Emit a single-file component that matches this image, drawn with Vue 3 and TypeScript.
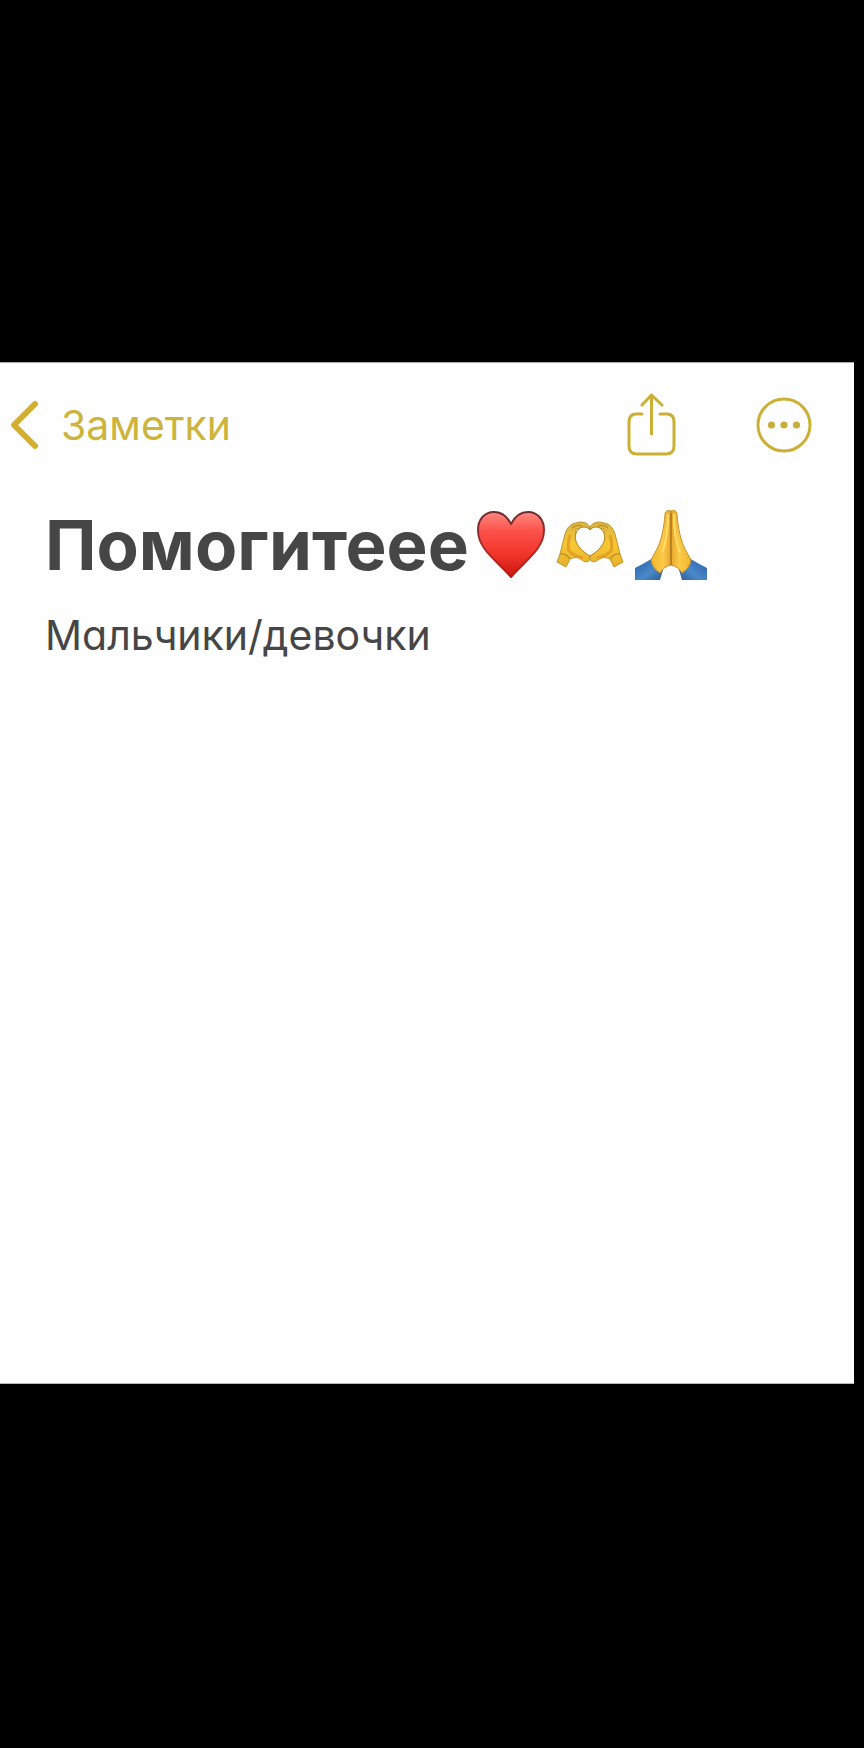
<script setup lang="ts">
const backLabel = 'Заметки'
const title = 'Помогитеее'
const body = 'Мальчики/девочки'
</script>

<template>
  <div class="screen">
    <main class="note">
      <header class="toolbar">
        <button class="back" type="button">
          <svg class="chevron" viewBox="0 0 28 50" aria-hidden="true">
            <path d="M25 4 4 25 25 46" />
          </svg>
          <span>{{ backLabel }}</span>
        </button>
        <div class="actions">
          <button class="action" type="button" aria-label="Поделиться">
            <svg class="share" viewBox="0 0 50 64" aria-hidden="true">
              <path d="M16 21H10Q3 21 3 29V53Q3 61 11 61H40Q48 61 48 53V29Q48 21 41 21H34" />
              <path d="M25.500 41V2M16 12 25.500 2 36 12" />
            </svg>
          </button>
          <button class="action" type="button" aria-label="Ещё">
            <svg class="more" viewBox="0 0 56 56" aria-hidden="true">
              <circle cx="28" cy="28" r="26" />
              <g class="dots">
                <circle cx="15.500" cy="28" r="3.600" />
                <circle cx="28" cy="28" r="3.600" />
                <circle cx="40.500" cy="28" r="3.600" />
              </g>
            </svg>
          </button>
        </div>
      </header>

      <article class="content">
        <h1 class="title">
          <span>{{ title }}</span>
          <span class="emojis">
            <svg class="emoji heart" viewBox="0 0 68 68" role="img" aria-label="сердце">
              <defs>
                <linearGradient id="heartFill" x1="0" y1="0" x2="0" y2="1">
                  <stop offset="0" stop-color="#ff8880" />
                  <stop offset=".3" stop-color="#fb5149" />
                  <stop offset=".65" stop-color="#f2352b" />
                  <stop offset="1" stop-color="#c9170f" />
                </linearGradient>
                <linearGradient id="heartEdge" x1="0" y1="0" x2="0" y2="1">
                  <stop offset="0" stop-color="#6e2c30" />
                  <stop offset=".5" stop-color="#a52f2e" />
                  <stop offset="1" stop-color="#ba1b12" />
                </linearGradient>
              </defs>
              <path
                d="M34 13C30 5 24 1 17 1 7 1 1 9 1 19 1 38 19 49 34 66 49 49 67 38 67 19 67 9 61 1 51 1 44 1 38 5 34 13Z"
                fill="url(#heartFill)" stroke="url(#heartEdge)" stroke-width="2" stroke-linejoin="round"
              />
            </svg>
            <svg class="emoji hands" viewBox="0 0 68 48" role="img" aria-label="руки сердечком">
              <defs>
                <linearGradient id="skin" x1="0" y1="0" x2="0" y2="1">
                  <stop offset="0" stop-color="#d9b440" />
                  <stop offset=".5" stop-color="#f8c832" />
                  <stop offset="1" stop-color="#e6b02c" />
                </linearGradient>
                <g id="hand">
                  <path
                    d="M34 6C31 1 25 0 20 2 14 3 11 7 9 13L4 33 1 41 10 46 14 38C19 36 22 36 26 39 30 42 33 41 34 38V31L20 20V8H34Z"
                    fill="url(#skin)" stroke="#b89730" stroke-width="1"
                  />
                  <path d="M4 33Q10 32 14 38M16 7Q20 3 26 5" fill="none" stroke="#bd8e25" stroke-width="1.300" />
                  <path d="M14 14Q11 24 13 30Q18 35 27 37" fill="none" stroke="#e3a127" stroke-width="3" />
                </g>
              </defs>
              <use href="#hand" />
              <use href="#hand" transform="translate(68 0) scale(-1 1)" />
              <path d="M34 9C31 5 25 5 22 9 16 16 20 27 34 35 48 27 52 16 46 9 43 5 37 5 34 9Z" fill="#fefefe" stroke="#a9811e" stroke-width="1" />
            </svg>
            <svg class="emoji prayer" viewBox="0 0 72 72" role="img" aria-label="сложенные ладони">
              <defs>
                <linearGradient id="palm" x1="0" y1="0" x2="1" y2="0">
                  <stop offset="0" stop-color="#eeb62c" />
                  <stop offset=".6" stop-color="#fcca48" />
                  <stop offset="1" stop-color="#e5a72b" />
                </linearGradient>
                <linearGradient id="sleeve" x1="0" y1="0" x2="1" y2="1">
                  <stop offset="0" stop-color="#285eaa" />
                  <stop offset=".6" stop-color="#4a88c8" />
                  <stop offset="1" stop-color="#2f5c94" />
                </linearGradient>
                <g id="prayingHand">
                  <path d="M0 59Q8 55 18 49L28 61 25 71H0Z" fill="url(#sleeve)" />
                  <path d="M36 2Q31 0 30 5C29 20 26 32 22 40L16 51Q17 59 25 64 28 58 36 56Z" fill="url(#palm)" stroke="#c6902b" stroke-width="1" />
                  <path d="M33 5Q33 29 27 44" fill="none" stroke="#ffdc68" stroke-width="2" />
                </g>
              </defs>
              <use href="#prayingHand" />
              <use href="#prayingHand" transform="translate(72 0) scale(-1 1)" />
              <path d="M36 4V56" fill="none" stroke="#b0771f" stroke-width="1.500" />
            </svg>
          </span>
        </h1>
        <p class="body">{{ body }}</p>
      </article>
    </main>
  </div>
</template>

<style>
html,
body {
  background: #000;
}
</style>

<style scoped>
.screen {
  box-sizing: border-box;
  min-height: 100vh;
  padding: 362px 10px 0 0;
  background: #000;
  font-family: Inter, "Liberation Sans", sans-serif;
}

.note {
  box-sizing: border-box;
  aspect-ratio: 854 / 1022;
  background: #fefefe;
  border-top: 1px solid #aaa;
  border-bottom: 1px solid #b5bbbb;
}

.toolbar {
  display: flex;
  align-items: center;
  justify-content: space-between;
  padding: 30px 42px 0 10px;
}

button {
  padding: 0;
  border: 0;
  background: none;
  color: #cdb43c;
  font: inherit;
}

.back {
  display: flex;
  align-items: center;
  gap: 23px;
  font-size: 41px;
  line-height: 48px;
}

svg {
  display: block;
}

.chevron,
.share,
.more {
  fill: none;
  stroke: #ccb036;
  stroke-linecap: round;
  stroke-linejoin: round;
}

.chevron {
  width: 28px;
  height: 50px;
  stroke: #d3ae2f;
  stroke-width: 6;
}

.actions {
  display: flex;
  align-items: center;
  gap: 80px;
}

.share {
  width: 50px;
  height: 64px;
  stroke-width: 3;
}

.more {
  width: 56px;
  height: 56px;
  stroke-width: 3;
}

.dots {
  fill: #c8af3d;
  stroke: none;
}

.content {
  padding: 44px 45px;
  color: #464646;
}

.title {
  display: flex;
  align-items: center;
  gap: 8px;
  margin: 0;
  font-size: 69px;
  font-weight: 700;
  line-height: 88px;
}

.emojis {
  display: flex;
  align-items: center;
  gap: 11px;
}

.heart {
  width: 68px;
  height: 68px;
}

.hands {
  width: 68px;
  height: 48px;
}

.prayer {
  width: 72px;
  height: 72px;
}

.body {
  margin: 18px 0 0;
  font-size: 41px;
  line-height: 56px;
  font-feature-settings: "cv11";
}
</style>
